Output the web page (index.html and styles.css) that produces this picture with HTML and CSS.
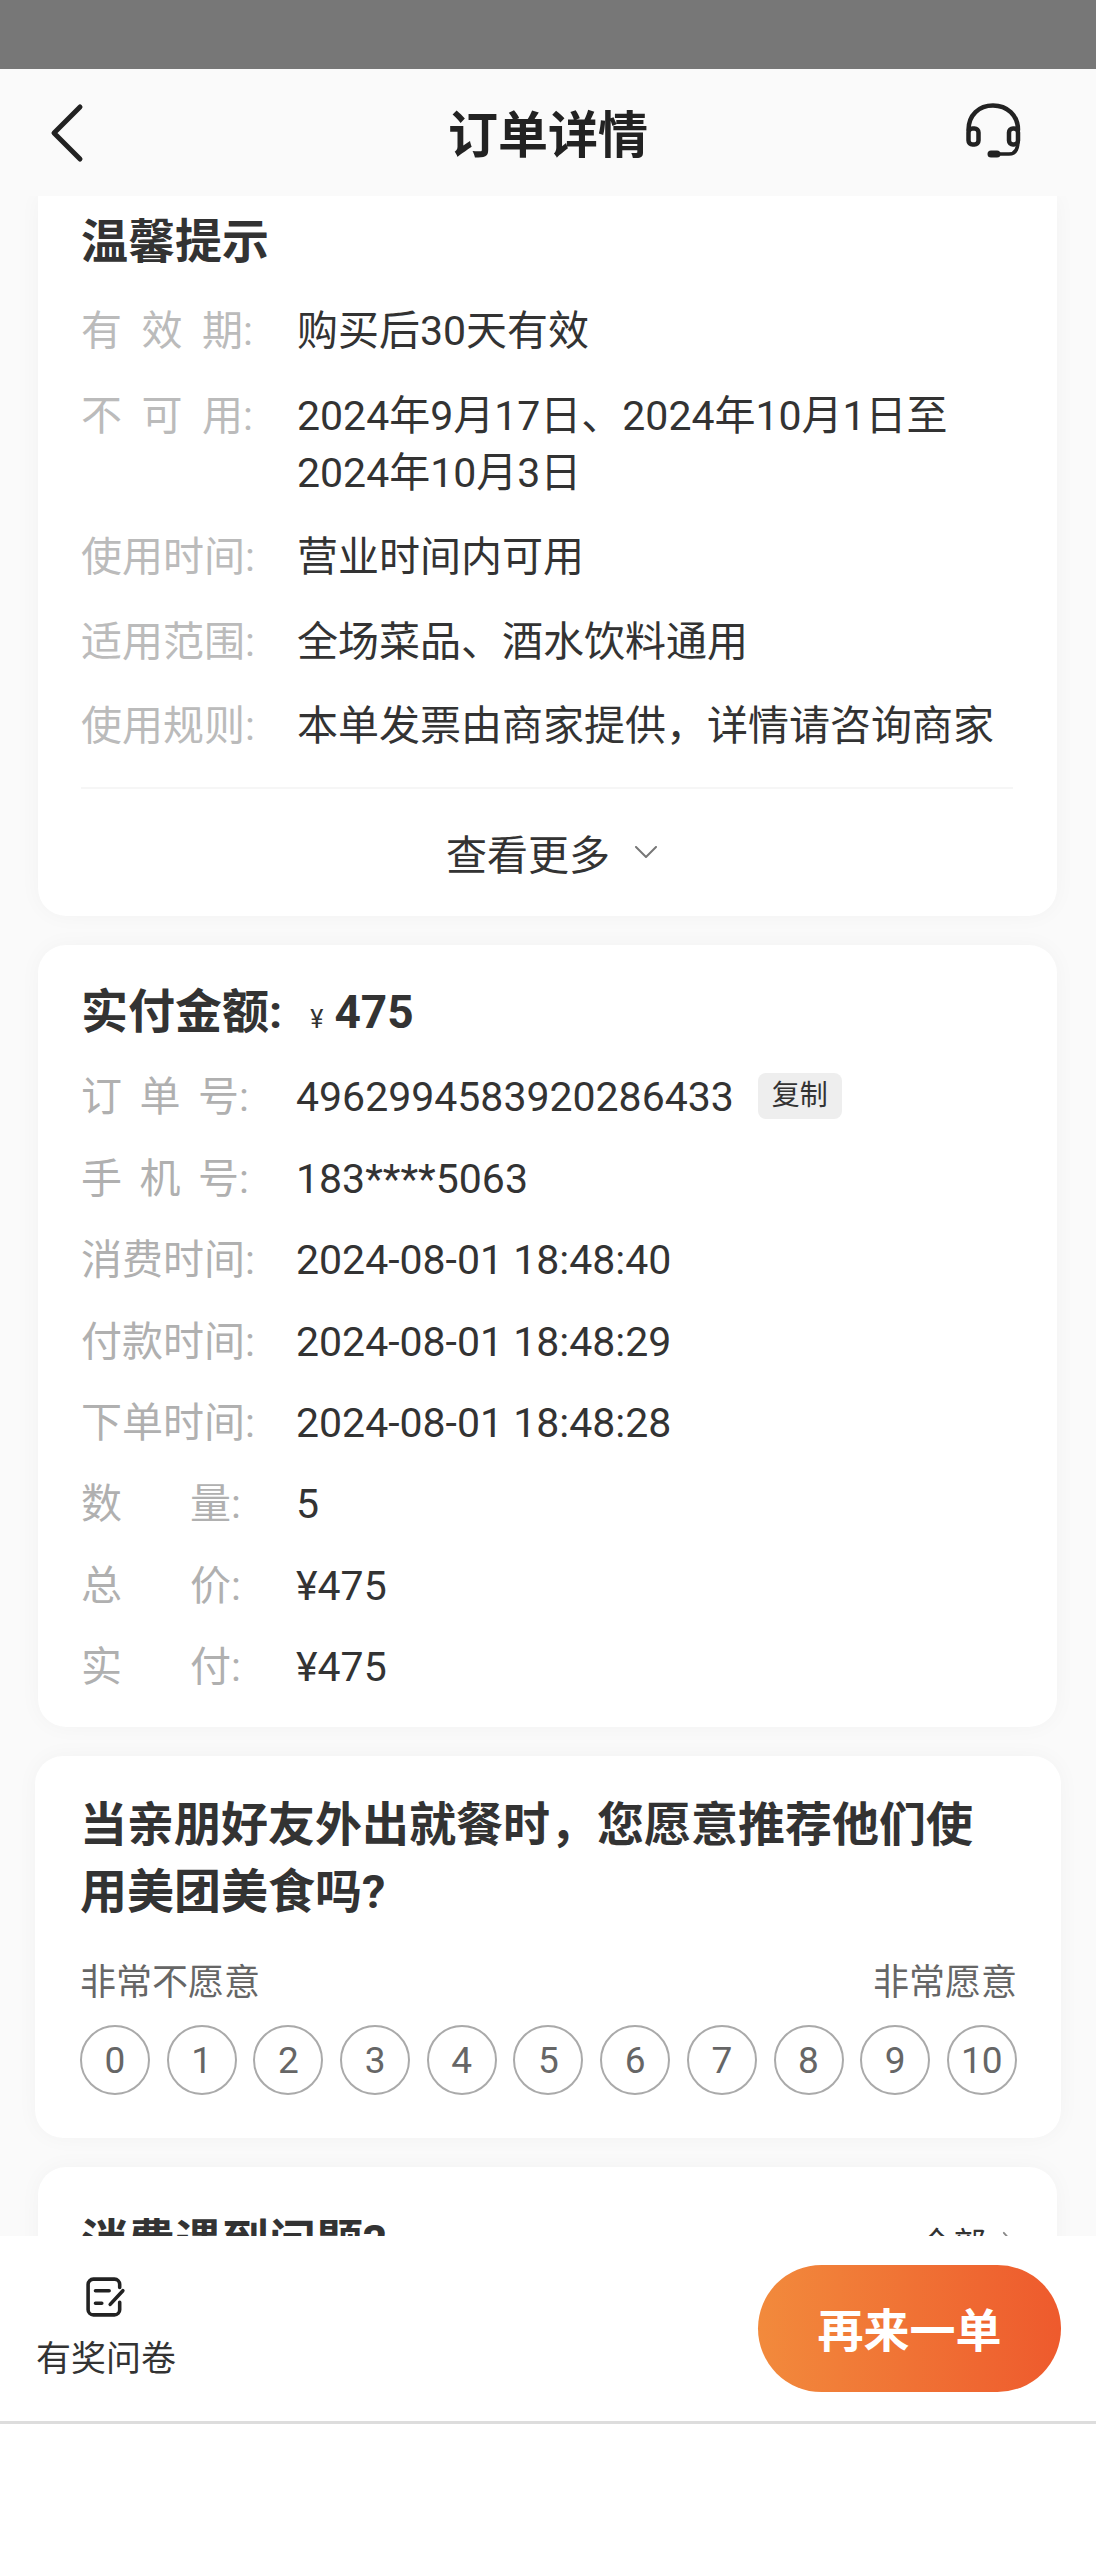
FILE: index.html
```html
<!DOCTYPE html>
<html lang="zh-CN">
<head>
    <meta charset="UTF-8">
    <meta name="viewport" content="width=device-width, initial-scale=1.0">
    <title>订单详情</title>
    <link rel="stylesheet" href="styles.css">
</head>
<body>

<div class="status-bar"></div>

<header class="nav-bar">
    <svg class="back-icon" viewBox="0 0 40 60" fill="none" stroke="#222" stroke-width="5" stroke-linecap="round" stroke-linejoin="round">
        <path d="M32 4 L6 30 L32 56"/>
    </svg>
    <h1>订单详情</h1>
    <svg class="service-icon" viewBox="0 0 60 60" fill="none" stroke="#222" stroke-width="4.5" stroke-linecap="round" stroke-linejoin="round">
        <path d="M3.5 27 C3.5 12 14 2.5 28 2.5 S53 12 53 27"/>
        <rect x="3.5" y="25.5" width="10" height="16" rx="4"/>
        <rect x="44" y="25.5" width="9" height="16" rx="4"/>
        <path d="M53 38 C53 46 50 51 44 51 H30" stroke-width="3.5"/>
        <path d="M26 51 H32" stroke-width="7"/>
    </svg>
</header>

<main class="scroll-area">
    <section class="card card-tips">
        <h2 class="card-title">温馨提示</h2>
        <div class="row">
            <span class="row-label"><span class="spaced">有效期</span>:</span>
            <span class="row-value">购买后30天有效</span>
        </div>
        <div class="row">
            <span class="row-label"><span class="spaced">不可用</span>:</span>
            <span class="row-value">2024年9月17日、2024年10月1日至2024年10月3日</span>
        </div>
        <div class="row">
            <span class="row-label">使用时间:</span>
            <span class="row-value">营业时间内可用</span>
        </div>
        <div class="row">
            <span class="row-label">适用范围:</span>
            <span class="row-value">全场菜品、酒水饮料通用</span>
        </div>
        <div class="row">
            <span class="row-label">使用规则:</span>
            <span class="row-value">本单发票由商家提供&#xFF0C;详情请咨询商家</span>
        </div>
        <div class="more">
            <span>查看更多</span>
            <svg class="more-icon" viewBox="0 0 24 12" fill="none" stroke="#777" stroke-width="2" stroke-linecap="round" stroke-linejoin="round">
                <path d="M2 1 L12 11 L22 1"/>
            </svg>
        </div>
    </section>

    <section class="card card-order">
        <h2 class="card-title">实付金额:<span class="yen">¥</span><span class="amount">475</span></h2>
        <div class="row">
            <span class="row-label"><span class="spaced">订单号</span>:</span>
            <span class="row-value">4962994583920286433</span>
            <span class="copy-btn">复制</span>
        </div>
        <div class="row">
            <span class="row-label"><span class="spaced">手机号</span>:</span>
            <span class="row-value">183****5063</span>
        </div>
        <div class="row">
            <span class="row-label">消费时间:</span>
            <span class="row-value">2024-08-01 18:48:40</span>
        </div>
        <div class="row">
            <span class="row-label">付款时间:</span>
            <span class="row-value">2024-08-01 18:48:29</span>
        </div>
        <div class="row">
            <span class="row-label">下单时间:</span>
            <span class="row-value">2024-08-01 18:48:28</span>
        </div>
        <div class="row">
            <span class="row-label"><span class="spaced spaced-short">数量</span>:</span>
            <span class="row-value">5</span>
        </div>
        <div class="row">
            <span class="row-label"><span class="spaced spaced-short">总价</span>:</span>
            <span class="row-value">¥475</span>
        </div>
        <div class="row">
            <span class="row-label"><span class="spaced spaced-short">实付</span>:</span>
            <span class="row-value">¥475</span>
        </div>
    </section>

    <section class="card card-survey">
        <h2 class="survey-title">当亲朋好友外出就餐时&#xFF0C;您愿意推荐他们使用美团美食吗?</h2>
        <div class="survey-ends">
            <span>非常不愿意</span>
            <span>非常愿意</span>
        </div>
        <div class="score-list">
            <span class="score">0</span>
            <span class="score">1</span>
            <span class="score">2</span>
            <span class="score">3</span>
            <span class="score">4</span>
            <span class="score">5</span>
            <span class="score">6</span>
            <span class="score">7</span>
            <span class="score">8</span>
            <span class="score">9</span>
            <span class="score">10</span>
        </div>
    </section>

    <section class="card card-problem">
        <h2 class="card-title">消费遇到问题?</h2>
        <span class="all-link">
            <span>全部</span>
            <svg class="all-icon" viewBox="0 0 12 24" fill="none" stroke="#888" stroke-width="2" stroke-linecap="round" stroke-linejoin="round">
                <path d="M2 2 L11 12 L2 22"/>
            </svg>
        </span>
    </section>
</main>

<footer class="bottom-bar">
    <div class="survey-entry">
        <svg class="survey-icon" viewBox="0 0 38 38" fill="none" stroke="#222" stroke-width="3.4" stroke-linecap="round" stroke-linejoin="round">
            <path d="M32 10 V7 a5 5 0 0 0 -5 -5 H7 a5 5 0 0 0 -5 5 V31 a5 5 0 0 0 5 5 H27 a5 5 0 0 0 5 -5 V24"/>
            <path d="M9 13 H22 M9 25 H15"/>
            <path d="M35 13 L23 26"/>
        </svg>
        <span>有奖问卷</span>
    </div>
    <button class="again-btn">再来一单</button>
</footer>

<div class="bottom-space"></div>

</body>
</html>
```

FILE: styles.css
```css
* {
    box-sizing: border-box;
}
body {
    font-family: Roboto, "Noto Sans CJK SC", sans-serif;
    margin: 0;
    width: 1096px;
    height: 2560px;
    display: flex;
    flex-direction: column;
    background: #fff;
    color: #333;
    overflow: hidden;
}
.status-bar {
    height: 69px;
    background: #777;
}
.nav-bar {
    height: 127px;
    padding: 0 48px;
    display: grid;
    grid-template-columns: 1fr auto 1fr;
    align-items: center;
    background: #fafafa;
}
.nav-bar h1 {
    margin: 0 0 4px;
    font-size: 50px;
    font-weight: 700;
    color: #222;
}
.back-icon {
    width: 40px;
    height: 60px;
}
.service-icon {
    width: 60px;
    height: 60px;
    margin-right: 23px;
    justify-self: end;
}
.scroll-area {
    height: 2040px;
    overflow: hidden;
    background: #fafafa;
}
.card {
    margin: 0 39px 29px 38px;
    padding: 34px 44px 31px 43px;
    background: #fff;
    border-radius: 28px;
    box-shadow: 0 0 22px rgba(0, 0, 0, 0.035);
}
.card-tips {
    padding-top: 13px;
    padding-bottom: 0;
    border-radius: 0 0 28px 28px;
}
.card-title {
    margin: 0;
    font-size: 47px;
    line-height: 66px;
    font-weight: 700;
}
.yen {
    margin-left: 28px;
    font-size: 25px;
    font-weight: 400;
    line-height: 1;
}
.amount {
    margin-left: 11px;
    font-size: 46px;
    font-weight: 700;
    line-height: 1;
}
.row {
    display: flex;
    align-items: flex-start;
    margin-top: 27.6px;
    font-size: 41px;
    line-height: 57px;
}
.card-tips .card-title + .row {
    margin-top: 28px;
}
.card-order .row {
    margin-top: 24.4px;
}
.row-label {
    flex: none;
    width: 216px;
    color: #bbb;
}
.card-order .row-label {
    width: 215px;
    color: #b0b0b0;
}
.spaced {
    display: inline-block;
    width: 162px;
    text-align-last: justify;
}
.card-order .spaced {
    width: 158px;
}
.card-order .spaced-short {
    width: 150px;
}
.row-value {
    color: #333;
}
.copy-btn {
    width: 84px;
    height: 46px;
    margin: 4px 0 0 24px;
    background: #eee;
    border-radius: 8px;
    font-size: 28px;
    line-height: 46px;
    text-align: center;
}
.more {
    margin-top: 31.6px;
    height: 129px;
    border-top: 2px solid #f6f6f6;
    padding-left: 10px;
    display: flex;
    align-items: center;
    justify-content: center;
    gap: 24px;
    font-size: 41px;
}
.more-icon {
    width: 24px;
    height: 12px;
}
.card-survey {
    margin: 0 35px 29px;
    padding: 35px 44px 43px 45px;
}
.survey-title {
    margin: 0;
    font-size: 47px;
    line-height: 67px;
    font-weight: 700;
}
.survey-ends {
    display: flex;
    justify-content: space-between;
    margin-top: 33px;
    font-size: 36px;
    line-height: 50px;
    color: #666;
}
.score-list {
    display: flex;
    justify-content: space-between;
    margin-top: 17px;
}
.score {
    width: 70px;
    height: 70px;
    border: 2px solid #aaa;
    border-radius: 50%;
    display: flex;
    align-items: center;
    justify-content: center;
    font-size: 37px;
    color: #666;
}
.card-problem {
    padding-top: 42px;
    display: flex;
    justify-content: space-between;
    align-items: center;
}
.all-link {
    display: flex;
    align-items: center;
    gap: 16px;
    font-size: 33px;
    color: #333;
}
.all-icon {
    width: 11px;
    height: 24px;
}
.bottom-bar {
    height: 188px;
    padding: 29px 35px 29px 36px;
    display: flex;
    align-items: flex-start;
    justify-content: space-between;
    background: #fff;
    border-bottom: 3px solid #ddd;
}
.survey-entry {
    display: flex;
    flex-direction: column;
    align-items: center;
    font-size: 35px;
    line-height: 50px;
}
.survey-icon {
    width: 40px;
    height: 40px;
    margin: 12px 0 18px;
}
.again-btn {
    width: 303px;
    height: 127px;
    padding: 0 0 4px;
    border: none;
    border-radius: 64px;
    background: linear-gradient(90deg, #f28a3c, #ee5a2d);
    color: #fff;
    font-family: inherit;
    font-size: 46px;
    font-weight: 700;
}
.bottom-space {
    flex: 1;
    background: #fff;
}
```
